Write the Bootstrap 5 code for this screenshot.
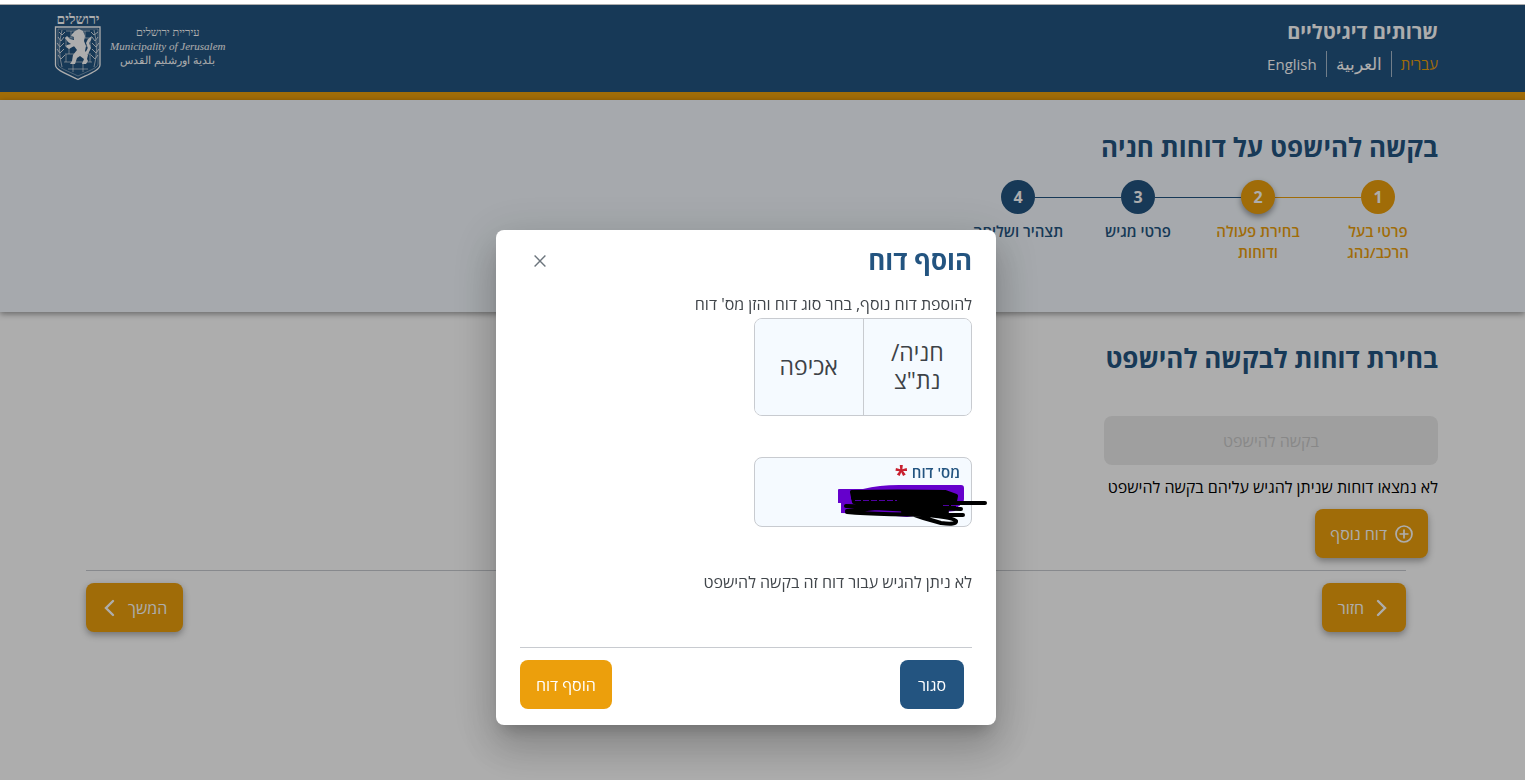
<!DOCTYPE html>
<html lang="he" dir="rtl">
<head>
<meta charset="utf-8">
<meta name="viewport" content="width=device-width, initial-scale=1">
<title>בקשה להישפט על דוחות חניה</title>
<link rel="stylesheet" href="https://cdn.jsdelivr.net/npm/bootstrap@5.3.0/dist/css/bootstrap.min.css">
<style>
  :root { --navy: #235480; --amber: #ec9f0c; --pale: #f5faff; --rule: #c8cbd0; }
  body { font-family: "Open Sans", "Noto Sans", sans-serif; font-size: 16px; line-height: 20px; color: #000; padding-top: 5px; min-height: 100vh; }
  h1, h2 { font-size: 26px; line-height: 36px; font-weight: 700; color: var(--navy); margin: 0; }
  .gutter { padding-inline: 87px 54px; }
  .top-bar { background: var(--navy); color: #fff; border-bottom: 8px solid var(--amber); height: 95px; }
  .site-name { font-size: 20px; line-height: 30px; font-weight: 700; }
  .langs a { color: #fff; text-decoration: none; line-height: 26px; padding-inline: 9px; border-inline-start: 1px solid #ffffff99; font-size: 15px; }
  .langs a:first-child { color: var(--amber); border: 0; padding-inline-start: 0; }
  .langs a[lang=ar] { font-size: 17px; }
  .city { font-family: "Liberation Serif", serif; font-size: 11px; line-height: 14px; text-align: center; }
  .intro { background: var(--pale); min-height: 212px; padding-top: 29px; box-shadow: 0 2px 6px #0006; position: relative; }
  .steps { list-style: none; margin: 15px 0 0; padding: 0; }
  .steps li { width: 120px; text-align: center; font-weight: 600; color: var(--navy); line-height: 21px; font-size: 15px; }
  .steps .track { display: flex; align-items: center; margin-bottom: 7px; }
  .steps .track::before, .steps .track::after { content: ""; flex: 1; height: 1px; background: var(--navy); }
  .steps .dot { width: 34px; height: 34px; line-height: 34px; border-radius: 50%; background: var(--navy); color: #fff; font-weight: 700; font-size: 16px; }
  .steps li:first-child .track::before, .steps li:last-child .track::after { visibility: hidden; }
  .steps .reached { color: var(--amber); }
  .steps .reached .dot, .steps .reached .track::before, .steps li:first-child .track::after { background: var(--amber); }
  .steps .current .dot { box-shadow: 0 3px 6px #0006; }
  .steps .current .track::after { background: var(--navy); }
  .steps .caption { display: block; padding-inline: 12px; }
  .steps .one-line { white-space: nowrap; padding-inline: 0; }
  .action { height: 49px; padding: 0 16px; border: 0; border-radius: 8px; color: #fff; background: var(--amber); font-size: 16px; font-weight: 500; }
  .action:hover { color: #fff; background: #d48d05; }
  .action.raised { box-shadow: 0 3px 7px #0005; }
  .action.navy { background: var(--navy); padding: 0 18px; }
  .action.add-ticket { margin: 12px 10px 0; padding: 0 15px; }
  .choice-panel { width: 334px; }
  .choice-panel .action:disabled { background: #ebebeb; color: #c9c9c9; opacity: 1; }
  .nav-row { margin-inline: 119px 86px; margin-top: 12px; border-top: 1px solid var(--rule); padding-top: 12px; }
  .modal-backdrop { top: 4px; height: auto; bottom: 0; opacity: .32; }
  .modal { padding-inline-start: 33px; }
  .modal-dialog { margin-top: 230px; color: #41464b; }
  .modal-content { border: 0; border-radius: 8px; padding: 12px 24px 16px; box-shadow: 0 11px 15px -7px #0003, 0 24px 38px 3px #00000024, 0 9px 46px 8px #0000001f; }
  .close-x { border: 0; background: none; padding: 0 0 2px; width: 40px; height: 36px; color: #6c757d; }
  .ticket-kinds { width: 218px; height: 98px; border: 1px solid var(--rule); border-radius: 8px; overflow: hidden; }
  .ticket-kinds button { flex: 1 1 0; min-width: 0; border: 0; background: var(--pale); color: #3d4247; font-size: 23px; line-height: 28px; padding: 0 16px 2px; }
  .ticket-kinds button + button { border-inline-start: 1px solid var(--rule); }
  .ticket-field { width: 218px; height: 70px; border: 1px solid var(--rule); border-radius: 8px; background: var(--pale); padding: 4px 11px; margin-top: 41px; }
  .ticket-field label { color: var(--navy); font-weight: 600; font-size: 15px; line-height: 20px; display: block; }
  .ticket-field .star { color: #c8202f; font-size: 24px; line-height: 16px; font-weight: 700; vertical-align: -5px; }
  .ticket-field input { width: 100%; border: 0; background: none; height: 32px; outline: 0; }
  .scribble { position: absolute; top: 26px; inset-inline-start: -18px; pointer-events: none; }
  .notice { margin: 45px 0 0; }
  .modal-actions { border-top: 1px solid var(--rule); margin-top: 55px; padding-top: 12px; padding-inline-start: 8px; }
</style>
</head>
<body>
<header class="top-bar gutter d-flex justify-content-between">
  <div class="pt-2 mt-1">
    <div class="site-name">שרותים דיגיטליים</div>
    <nav class="langs d-flex mt-1" aria-label="שפה">
      <a href="#">עברית</a><a href="#" lang="ar">العربية</a><a href="#" lang="en">English</a>
    </nav>
  </div>
  <div class="d-flex" dir="ltr">
    <svg width="48" height="80" viewBox="0 0 48 80" role="img" aria-label="ירושלים">
      <text x="24" y="19" fill="#fff" font-family="Liberation Serif, serif" font-size="14" font-weight="700" text-anchor="middle">ירושלים</text>
      <g fill="none" stroke="#fff">
        <path d="M1.500 22H46V60C46 65 35 69 24 74.500C13 69 1.500 65 1.500 60Z" stroke-width="1.300"/>
        <path d="M4 24H44V59C44 63 34 66 24 71C14 66 4 63 4 59Z" stroke-width=".4"/>
        <g stroke-width=".8" opacity=".7"><path d="M12 26H36M11 33H37M11 41H37M11 49H37M10 57H38M14 64H34M17 26V33M31 26V33M12 33V41M36 33V41M15 41V49M34 41V49M12 49V57M36 49V57M19 57V67M29 57V67"/></g>
        <g opacity=".8"><path d="M8 62Q3 44 8 25M40 62Q45 44 40 25" stroke-width=".8"/>
        <path d="M8 30l-3-3M7 36l-3-4M6 42l-3-4M6 48l-3-4M7 54l-3-4M8 30l3-3M7 36l3-4M6 42l4-4M6 48l4-4M7 54l4-4M40 30l-3-3M41 36l-3-4M42 42l-4-4M42 48l-4-4M41 54l-4-4M40 30l4-3M41 36l3-4M42 42l3-4M42 48l3-4M41 54l3-4" stroke-width="1"/></g>
      </g>
      <path fill="#fff" d="M18 29L21 26L25 24L29 26L31 31L30 36L32 41L31 46L34 50L33 54L34 56L32 59H28L30 54L26 51L23 53L21 59H16L18 56L19 50L23 45L20 41L15 44L12 42L13 40L17 39L14 37L11 33L13 31L16 34L20 35L20 32L17 31ZM31 48L34 43L32 38L34 34L38 31L37 35L35 38L37 43L34 49Z"/>
    </svg>
    <div class="city pt-3 ms-2 mt-1" dir="rtl">
      <div>עיריית ירושלים</div>
      <div lang="en"><i>Municipality of Jerusalem</i></div>
      <div lang="ar">بلدية اورشليم القدس</div>
    </div>
  </div>
</header>

<section class="intro gutter">
  <h1>בקשה להישפט על דוחות חניה</h1>
  <ol class="steps d-flex">
    <li class="reached"><div class="track"><span class="dot">1</span></div><span class="caption">פרטי בעל הרכב/נהג</span></li>
    <li class="reached current"><div class="track"><span class="dot">2</span></div><span class="caption">בחירת פעולה ודוחות</span></li>
    <li><div class="track"><span class="dot">3</span></div><span class="caption">פרטי מגיש</span></li>
    <li><div class="track"><span class="dot">4</span></div><span class="caption one-line">תצהיר ושליחה</span></li>
  </ol>
</section>

<main>
  <section class="gutter pt-4">
    <h2 class="pt-1">בחירת דוחות לבקשה להישפט</h2>
    <div class="choice-panel mt-4 pt-3">
      <button class="action btn w-100" type="button" disabled>בקשה להישפט</button>
      <p class="mt-2 mb-0 pt-1 text-nowrap">לא נמצאו דוחות שניתן להגיש עליהם בקשה להישפט</p>
      <button class="action raised btn d-flex align-items-center gap-2 add-ticket" type="button">
        <svg width="18" height="18" viewBox="0 0 18 18" fill="none" stroke="#fff" stroke-width="1.700"><circle cx="9" cy="9" r="8"/><path d="M4.500 9h9M9 4.500v9"/></svg>
        דוח נוסף
      </button>
    </div>
  </section>
  <div class="nav-row d-flex justify-content-between pb-5">
    <button class="action raised btn d-flex align-items-center gap-2" type="button">
      <svg width="18" height="18" viewBox="0 0 18 18" fill="none" stroke="#fff" stroke-width="2.400" stroke-linecap="round"><path d="M6 2l7 7-7 7"/></svg>חזור
    </button>
    <button class="action raised btn d-flex align-items-center gap-2" type="button">
      המשך<svg width="18" height="18" viewBox="0 0 18 18" fill="none" stroke="#fff" stroke-width="2.400" stroke-linecap="round"><path d="M11 2L4 9l7 7"/></svg>
    </button>
  </div>
</main>

<div class="modal-backdrop"></div>
<div class="modal d-block" role="dialog" aria-modal="true" aria-labelledby="dialog-title" tabindex="-1">
  <div class="modal-dialog">
    <div class="modal-content">
      <div class="d-flex justify-content-between align-items-center">
        <h2 id="dialog-title">הוסף דוח</h2>
        <button class="close-x" type="button" aria-label="סגור חלון">
          <svg width="12" height="12" viewBox="0 0 12 12" fill="none" stroke="currentColor" stroke-width="1.400"><path d="M.6.6l10.800 10.800M11.400.6L.6 11.400"/></svg>
        </button>
      </div>
      <p class="mt-3 mb-1">להוספת דוח נוסף, בחר סוג דוח והזן מס' דוח</p>
      <div class="ticket-kinds d-flex" role="group" aria-label="סוג דוח">
        <button type="button">חניה/ נת"צ</button>
        <button type="button">אכיפה</button>
      </div>
      <div class="ticket-field position-relative">
        <label for="ticket">מס' דוח <span class="star">*</span></label>
        <input id="ticket" type="text">
        <svg class="scribble" width="152" height="44" viewBox="0 0 152 44">
          <path fill="#6500cc" d="M1 6Q1 5 2 5H26Q42 1 62 1H124Q127 1 127 4V15Q127 18 124 19L118 27L98 29L70 33L36 30L4 29V19H1Z"/>
          <g fill="none" stroke="#000" stroke-linecap="round" stroke-linejoin="round" stroke-width="4">
            <path fill="#000" d="M15 8Q60 7 108 8L119 12L117 22L60 24L17 18Z"/>
            <path d="M148 19H20M9 22L124 25M10 27L40 24M10 28Q40 31 126 31M16 14L118 16M66 27Q85 34 104 39Q120 41 119 37Q117 33 78 30M20 23L110 28"/>
          </g>
          <path d="M18 16.500H60M106 21.500H123" stroke="#6500cc" stroke-width=".8" stroke-dasharray="6 2"/>
        </svg>
      </div>
      <p class="notice">לא ניתן להגיש עבור דוח זה בקשה להישפט</p>
      <div class="modal-actions d-flex justify-content-between">
        <button class="action navy btn" type="button">סגור</button>
        <button class="action btn" type="button">הוסף דוח</button>
      </div>
    </div>
  </div>
</div>
<script src="https://cdn.jsdelivr.net/npm/bootstrap@5.3.0/dist/js/bootstrap.bundle.min.js"></script>
</body>
</html>
